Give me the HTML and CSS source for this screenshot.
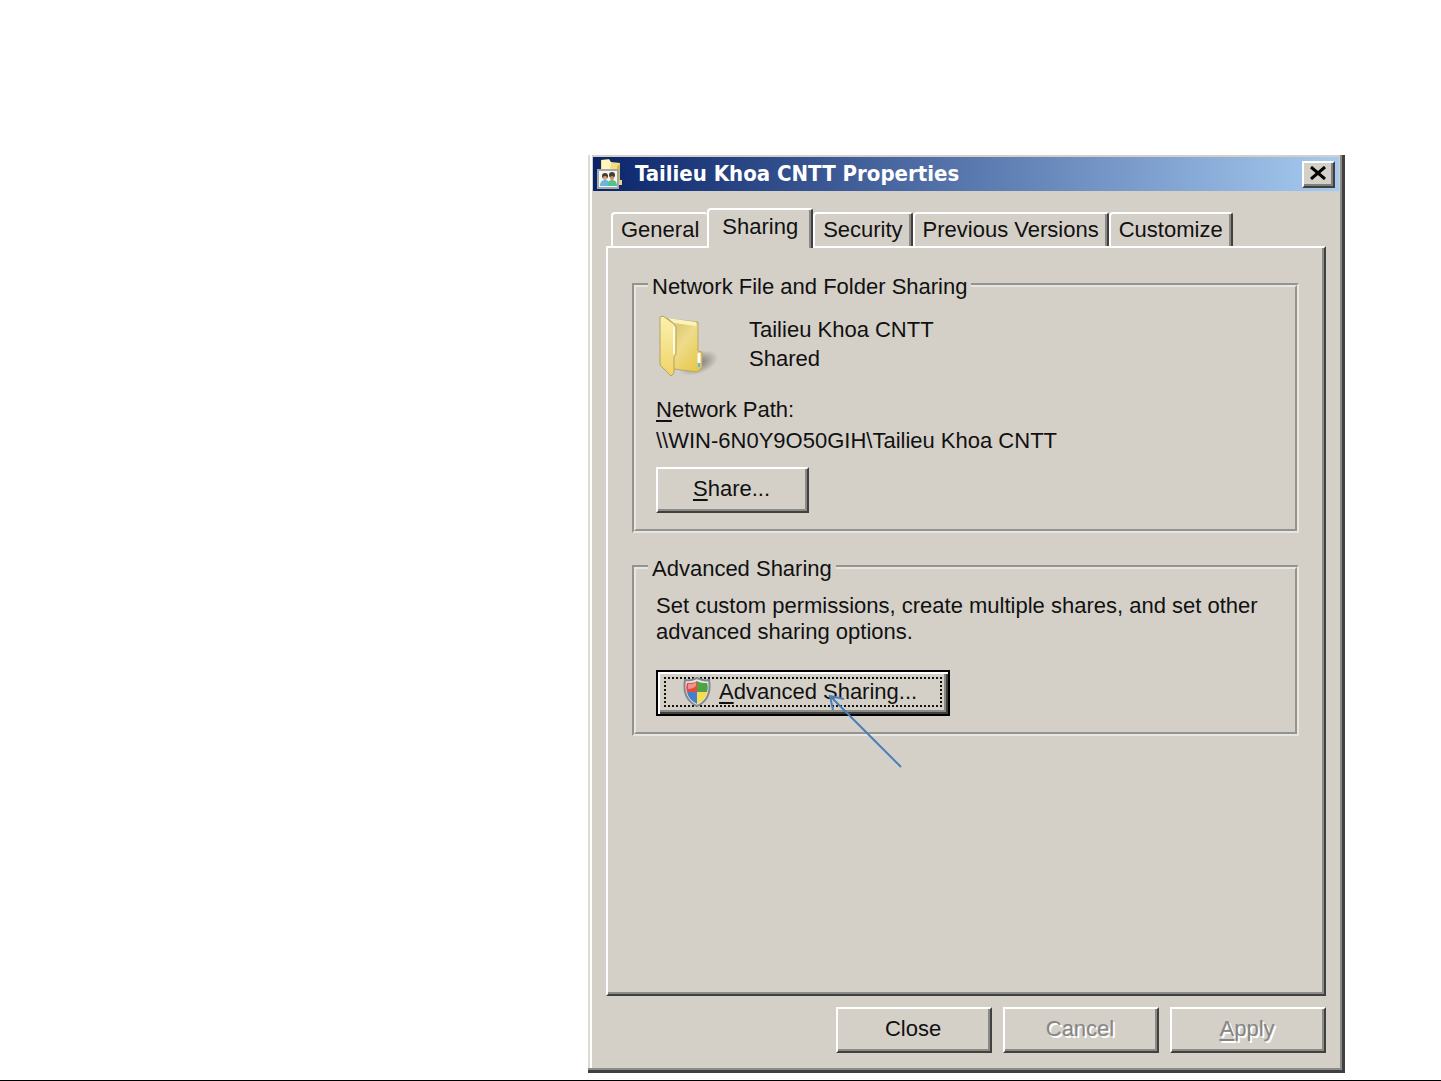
FILE: index.html
```
<!DOCTYPE html>
<html lang="en">
<head>
    <meta charset="UTF-8">
    <meta name="viewport" content="width=device-width, initial-scale=1.0">
    <title>Tailieu Khoa CNTT Properties</title>
    <link rel="stylesheet" href="styles.css">
</head>
<body>
    <main class="slide">
        <section class="dialog">
            <header class="title-bar">
                <svg class="title-icon" viewBox="0 0 26 32">
                    <path d="M4 2l8-1 2 3 9 1v21l-3 2-16-3z" fill="#f3dc82"/>
                    <path d="M5 2l7 0 2 3-1 7-8 0z" fill="#fdf4bf"/>
                    <path d="M20 8l3-2v20l-3 2z" fill="#d9bb50"/>
                    <path d="M22 22h3v5h-3z" fill="#e9d68a"/>
                    <path d="M1 12h20v18H1z" fill="#f4f6f4" stroke="#a6a8a6" stroke-width="2"/>
                    <circle cx="8" cy="18" r="3" fill="#4b3b30"/>
                    <circle cx="15" cy="17" r="3" fill="#4b3b30"/>
                    <circle cx="8" cy="20" r="2" fill="#d9a37c"/>
                    <circle cx="15" cy="20" r="2" fill="#c89068"/>
                    <path d="M3 28c0-4 2-6 5-6s5 2 5 6z" fill="#65b7dc"/>
                    <path d="M11 28c0-4 1-6 4-6s5 2 5 6z" fill="#56c08c"/>
                </svg>
                <h1>Tailieu Khoa CNTT Properties</h1>
                <button class="close-button" aria-label="Close window">
                    <svg viewBox="0 0 18 14"><path d="M2 1l14 12M16 1L2 13" stroke="#000" stroke-width="3"/></svg>
                </button>
            </header>

            <div class="tabs" role="tablist">
                <button class="tab" role="tab">General</button>
                <button class="tab active" role="tab" aria-selected="true">Sharing</button>
                <button class="tab" role="tab">Security</button>
                <button class="tab" role="tab">Previous Versions</button>
                <button class="tab" role="tab">Customize</button>
            </div>

            <div class="panel" role="tabpanel">
                <fieldset class="group">
                    <legend>Network File and Folder Sharing</legend>
                    <div class="folder">
                        <svg class="folder-icon" viewBox="0 0 64 64">
                            <defs>
                                <linearGradient id="back" x1="0" y1="0" x2="1" y2="1">
                                    <stop offset="0" stop-color="#cdb65d"/>
                                    <stop offset="0.5" stop-color="#eedc8b"/>
                                    <stop offset="1" stop-color="#e5c43c"/>
                                </linearGradient>
                                <linearGradient id="front" x1="0" y1="0" x2="0" y2="1">
                                    <stop offset="0" stop-color="#fbf0b0"/>
                                    <stop offset="1" stop-color="#efd467"/>
                                </linearGradient>
                                <radialGradient id="shade">
                                    <stop offset="0" stop-color="#77736b"/>
                                    <stop offset="1" stop-color="#77736b" stop-opacity="0"/>
                                </radialGradient>
                            </defs>
                            <ellipse cx="42" cy="48" rx="21" ry="11" fill="url(#shade)" transform="rotate(-20 42 48)"/>
                            <path d="M5 3l37 4v29l4 1v16l-5 4-23-3z" fill="url(#back)" stroke="#b9a766"/>
                            <path d="M12 3l28 4v4L18 8z" fill="#fbf3bd"/>
                            <path d="M4 2l3-1 11 8 2 3v27l-2 3v16l-3 3L4 50z" fill="url(#front)" stroke="#b5a25d"/>
                            <path d="M18 12v27" stroke="#fffbe0" stroke-width="2"/>
                            <path d="M43 38v14" stroke="#fff" stroke-width="3"/>
                            <path d="M43 48v4" stroke="#71b7cb" stroke-width="3"/>
                        </svg>
                        <div class="folder-text">
                            <p>Tailieu Khoa CNTT</p>
                            <p>Shared</p>
                        </div>
                    </div>
                    <div class="path">
                        <p><u>N</u>etwork Path:</p>
                        <p>\\WIN-6N0Y9O50GIH\Tailieu Khoa CNTT</p>
                    </div>
                    <button class="button"><u>S</u>hare...</button>
                </fieldset>

                <fieldset class="group advanced">
                    <legend>Advanced Sharing</legend>
                    <p class="description">Set custom permissions, create multiple shares, and set other<br>advanced sharing options.</p>
                    <div class="pointed">
                        <button class="button default">
                            <span class="focus">
                                <svg class="shield" viewBox="0 0 28 30">
                                    <path d="M14 1c4 2 8 3 12 2 2 12-1 21-12 26C3 24 0 15 2 3c4 1 8 0 12-2z" fill="#e4e6e7" stroke="#85898c" stroke-width="2"/>
                                    <path d="M14 4v11H4c-1-3-1-6 0-9 4 0 7 0 10-2z" fill="#e64b40"/>
                                    <path d="M14 4c3 2 6 2 10 2 1 3 1 6 0 9H14z" fill="#4fa344"/>
                                    <path d="M4 15h10v12C8 24 5 20 4 15z" fill="#447fca"/>
                                    <path d="M14 15h10c-1 5-4 9-10 12z" fill="#f8dc50"/>
                                    <path d="M5 7c3 0 6 0 8-2v4c-2 2-5 3-8 3z" fill="#fff" opacity="0.4"/>
                                </svg>
                                <span><u>A</u>dvanced Sharing...</span>
                            </span>
                        </button>
                        <svg class="arrow" viewBox="0 0 76 76">
                            <path d="M74 74L3 3M17 6L3 3l3 14" fill="none" stroke="#4a7ebb" stroke-width="2"/>
                        </svg>
                    </div>
                </fieldset>
            </div>

            <footer class="actions">
                <button class="button">Close</button>
                <button class="button" disabled>Cancel</button>
                <button class="button" disabled><u>A</u>pply</button>
            </footer>
        </section>
    </main>
</body>
</html>
```
FILE: styles.css
```
* {
    box-sizing: border-box;
}

body {
    margin: 0;
    background-color: #fff;
    color: #111;
    font-family: "Liberation Sans", Arial, sans-serif;
    font-size: 22px;
    line-height: 26px;
}

p {
    margin: 0;
}

u {
    text-decoration-thickness: 2px;
    text-underline-offset: 3px;
}

.slide {
    display: grid;
    grid-template-columns: 588fr 757fr 96fr;
    align-items: start;
    min-height: 100vh;
    padding-top: 155px;
    border-bottom: 1px solid #000;
}

.dialog {
    grid-column: 2;
    padding: 2px 3px 17px 2px;
    background-color: #d4d0c8;
    border: solid #404040;
    border-width: 0 3px 3px 0;
    box-shadow: inset -2px -2px #8c8a85, inset 2px 0 #dedbd5, inset 4px 0 #fff;
}

/* title bar */

.title-bar {
    display: flex;
    align-items: center;
    height: 34px;
    margin-left: 3px;
    padding: 0 4px;
    background: linear-gradient(to right, #0a246a, #a6caf0);
}

.title-icon {
    width: 26px;
    height: 32px;
}

.title-bar h1 {
    flex: 1;
    margin: 0 0 0 12px;
    color: #fff;
    font-family: "DejaVu Sans Condensed", "DejaVu Sans", sans-serif;
    font-size: 22px;
}

.close-button {
    display: flex;
    align-items: center;
    justify-content: center;
    width: 33px;
    height: 27px;
    padding: 0 2px 2px 0;
    background-color: #d4d0c8;
    border: 2px solid;
    border-color: #fff #404040 #404040 #fff;
    box-shadow: inset -2px -2px #808080;
}

.close-button svg {
    width: 18px;
    height: 14px;
}

/* tabs */

.tabs {
    display: flex;
    align-items: flex-end;
    height: 55px;
    padding-left: 21px;
}

.tab {
    height: 34px;
    padding: 0 8px;
    background-color: #d4d0c8;
    border: 2px solid;
    border-color: #fff #404040 transparent #fff;
    border-bottom: 0;
    border-radius: 4px 3px 0 0;
    box-shadow: inset -2px 0 #8c8a85;
    color: inherit;
    font: inherit;
    white-space: nowrap;
}

.tab:first-child {
    border-right: 0;
    box-shadow: none;
}

.tab.active {
    z-index: 1;
    height: 40px;
    margin-bottom: -2px;
    padding: 0 13px 4px;
}

.panel {
    min-height: 750px;
    margin: 0 13px 0 16px;
    padding: 26px 25px 0 24px;
    border: 2px solid;
    border-color: #fff #404040 #404040 #fff;
    box-shadow: inset -2px -2px #8c8a85;
}

.group {
    min-width: 0;
    margin: 0;
    padding: 19px 20px 16px;
    border: 4px groove #e8e6e0;
}

.group legend {
    height: 22px;
    margin-left: -8px;
    padding: 0 4px;
}

.folder {
    display: flex;
    gap: 29px;
}

.folder-icon {
    width: 64px;
    height: 64px;
}

.folder-text {
    line-height: 29px;
}

.path {
    margin: 15px 0 11px;
    line-height: 31px;
}

.advanced {
    margin-top: 23px;
    padding-top: 15px;
}

.description {
    margin-bottom: 25px;
}

/* buttons */

.button {
    min-width: 153px;
    height: 46px;
    padding: 0 2px 2px 0;
    background-color: #d4d0c8;
    border: 2px solid;
    border-color: #fff #404040 #404040 #fff;
    box-shadow: inset -2px -2px #8c8a85;
    color: inherit;
    font: inherit;
}

.button:disabled {
    color: #858585;
    text-shadow: 2px 2px #fff;
}

.button.default {
    padding: 5px 6px 7px;
    border-color: #000;
    box-shadow: inset 2px 2px #fff, inset -2px -2px #404040, inset -4px -4px #8c8a85;
}

.focus {
    display: flex;
    align-items: center;
    gap: 8px;
    height: 100%;
    padding: 0 23px 0 17px;
    border: 2px dotted #111;
}

.shield {
    width: 28px;
    height: 30px;
}

.pointed {
    display: inline-block;
    position: relative;
}

.arrow {
    position: absolute;
    top: 23px;
    left: 171px;
    width: 76px;
    height: 76px;
}

.actions {
    display: flex;
    justify-content: flex-end;
    gap: 11px;
    margin-top: 11px;
    padding-right: 13px;
}

.actions .button {
    min-width: 156px;
}
```
